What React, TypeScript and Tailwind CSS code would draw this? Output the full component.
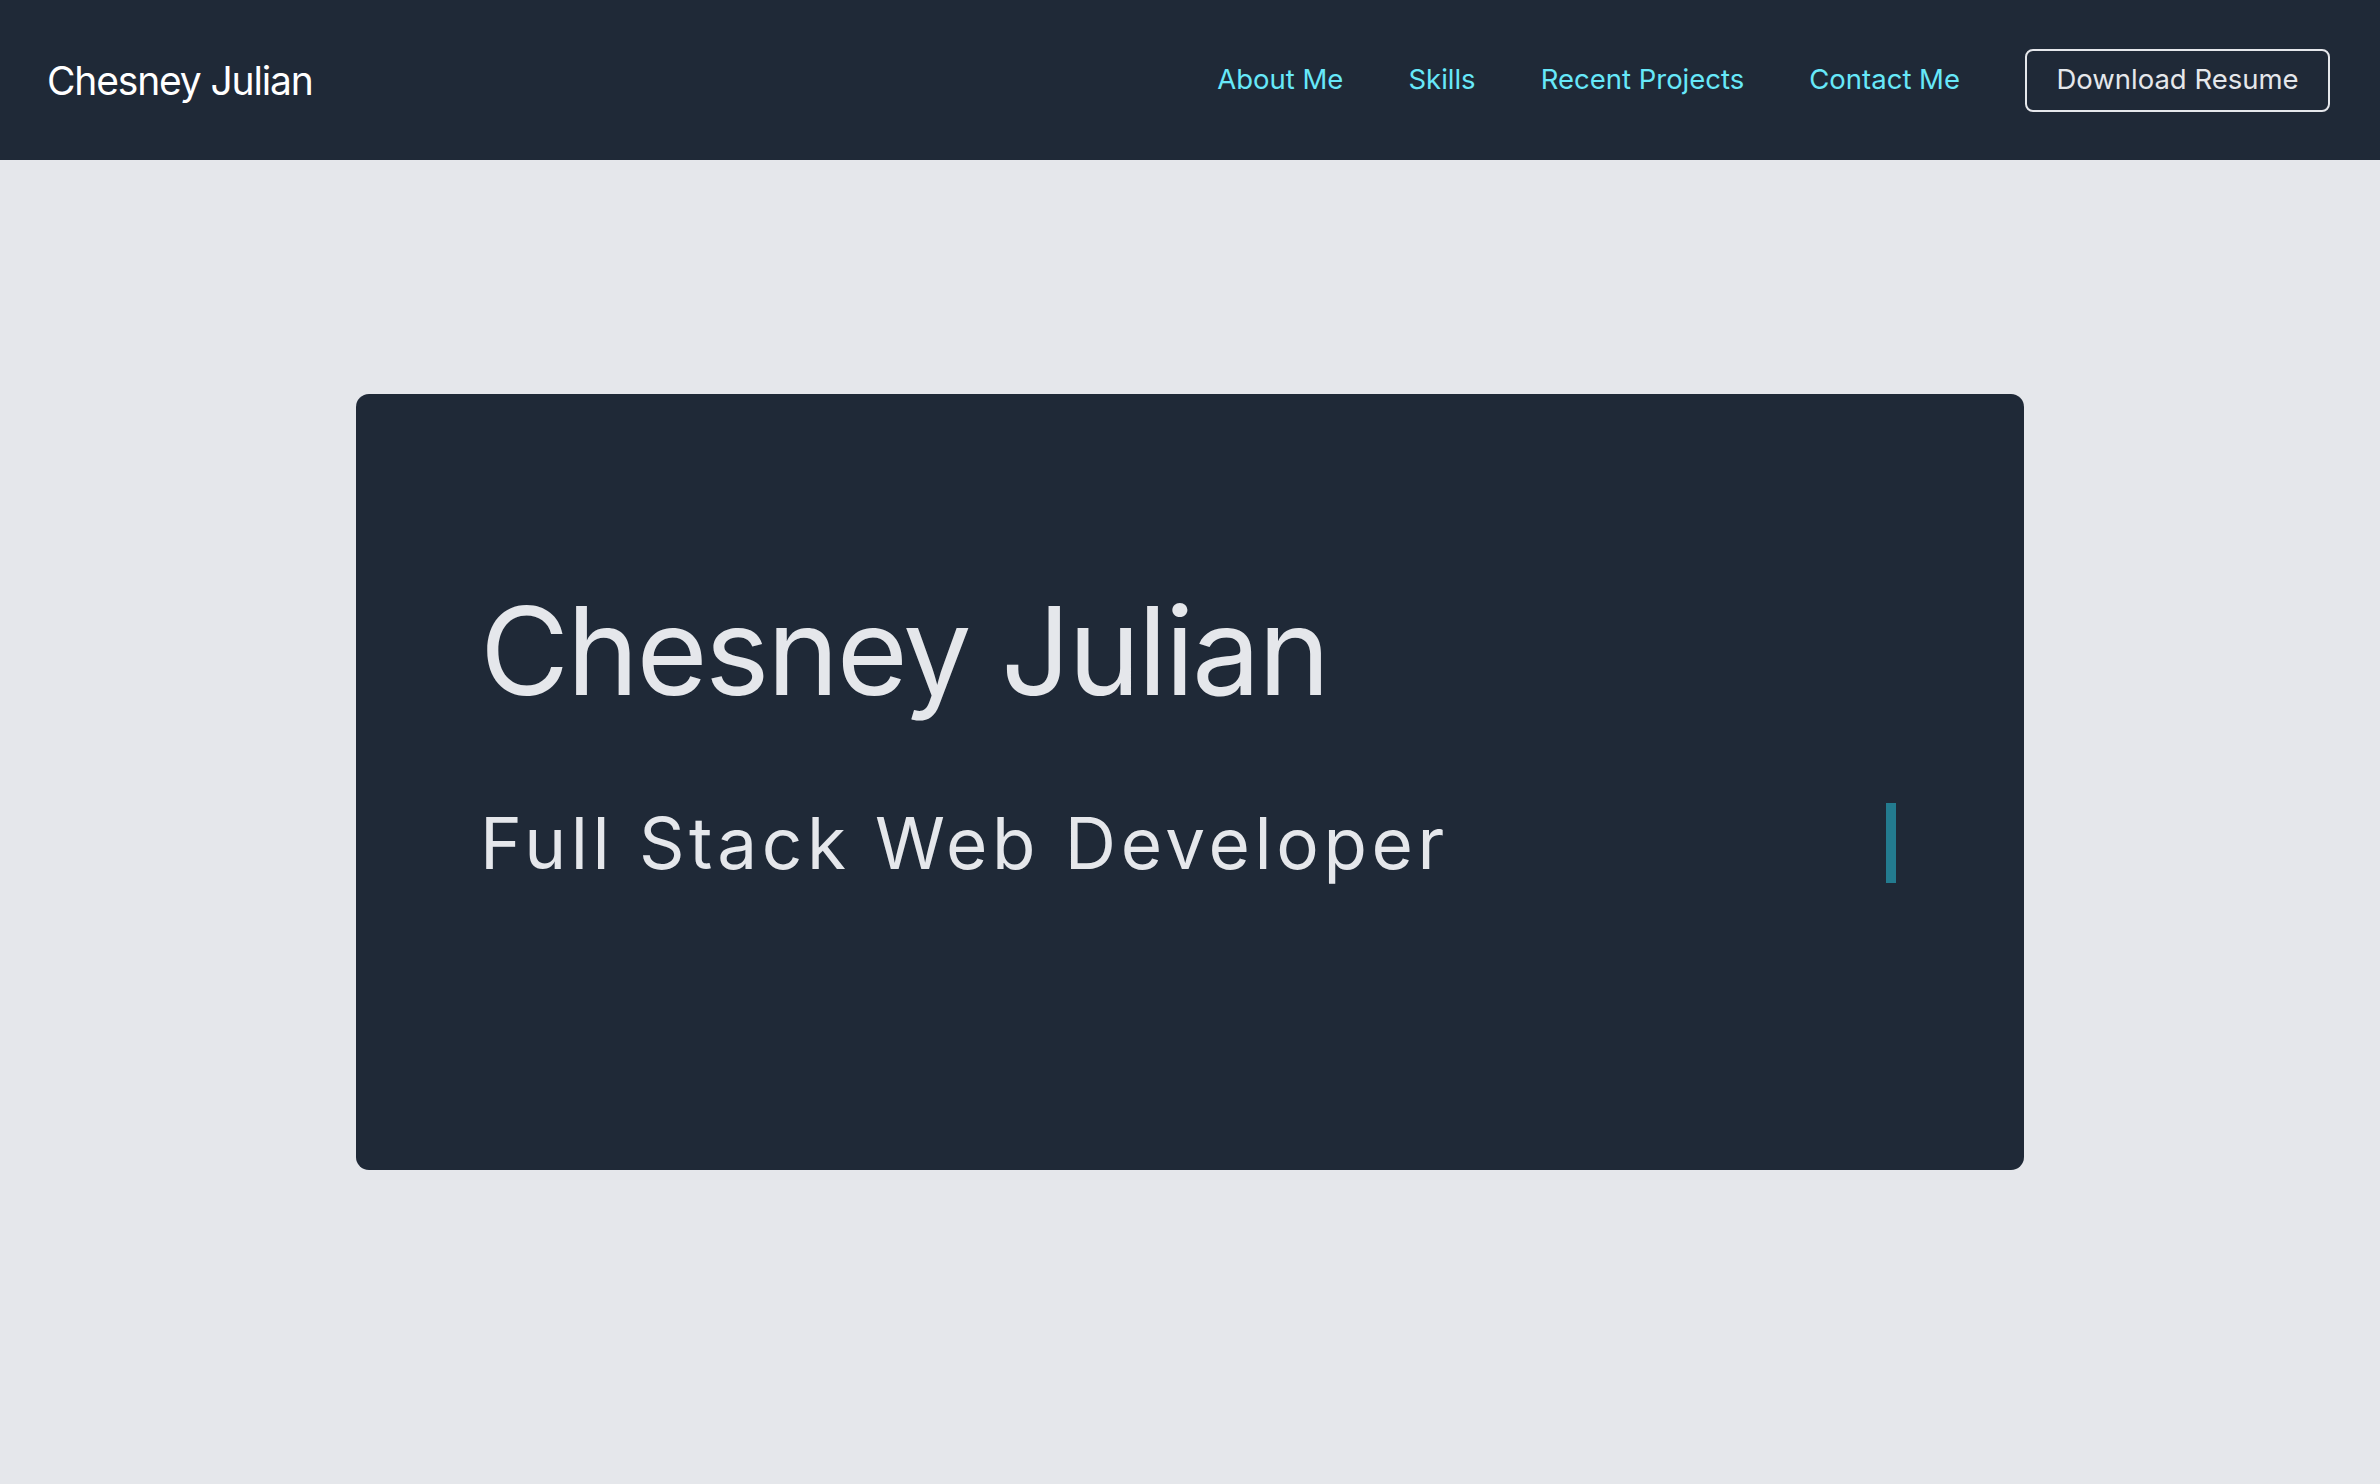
export default function App() {
  const font = { fontFamily: "Inter, 'Noto Sans', sans-serif" };
  return (
    <div className="min-h-screen bg-[#e5e7eb]" style={font}>
      <header className="h-[160px] bg-[#1f2937] flex items-center justify-between pl-[47px] pr-[50px]">
        <div className="text-[39px] text-white tracking-[-0.03em] leading-none">Chesney Julian</div>
        <nav className="flex items-center gap-[65px]">
          <a className="text-[27.5px] text-[#67e8f9] leading-none">About Me</a>
          <a className="text-[27.5px] text-[#67e8f9] leading-none">Skills</a>
          <a className="text-[27.5px] text-[#67e8f9] leading-none">Recent Projects</a>
          <a className="text-[27.5px] text-[#67e8f9] leading-none">Contact Me</a>
          <button className="w-[305px] h-[63px] border-2 border-[#e5e7eb] rounded-[8px] text-[27.5px] text-[#e5e7eb] leading-none flex items-center justify-center">
            Download Resume
          </button>
        </nav>
      </header>
      <main className="flex justify-center pt-[234px]">
        <div className="w-[1668px] h-[776px] bg-[#1f2937] rounded-[13px] pl-[124px] pr-[113px] pt-[196px]">
          <h1 className="text-[122px] text-[#e5e7eb] leading-none tracking-[-0.02em] font-normal">Chesney Julian</h1>
          <div className="mt-[91px] flex items-center justify-between">
            <div className="text-[71px] text-[#e5e7eb] tracking-[0.065em] leading-[80px]">Full Stack Web Developer</div>
            <div className="w-[10px] h-[80px] bg-[#237b8f] mr-[15px]" />
          </div>
        </div>
      </main>
    </div>
  );
}
